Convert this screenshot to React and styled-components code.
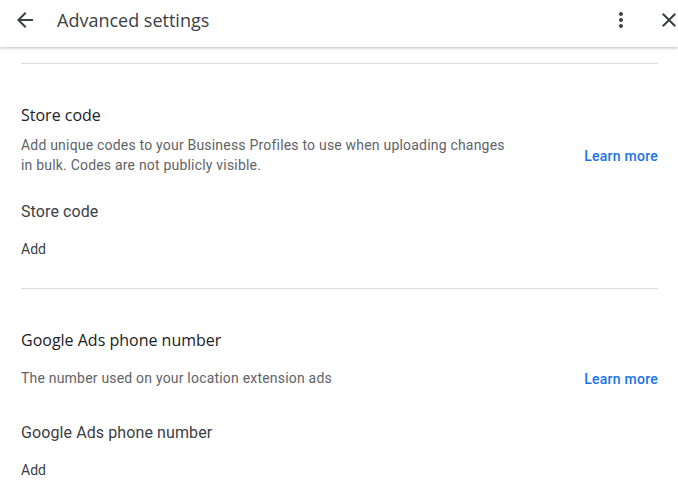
import React from 'react'
import styled, { createGlobalStyle } from 'styled-components'

const Global = createGlobalStyle`
  html, body {
    margin: 0;
    padding: 0;
    background: #fff;
    overflow: hidden;
    font-family: Roboto, "Liberation Sans", Arial, sans-serif;
  }
`

const sections = [
  {
    title: 'Store code',
    description: 'Add unique codes to your Business Profiles to use when uploading changes in bulk. Codes are not publicly visible.',
    label: 'Store code',
    descTop: 8,
    labelTop: 25,
  },
  {
    title: 'Google Ads phone number',
    description: 'The number used on your location extension ads',
    label: 'Google Ads phone number',
    descTop: 16,
    labelTop: 33,
  },
]

function App() {
  return (
    <Page>
      <Global />
      <Header>
        <IconButton aria-label="Back">
          <svg width="24" height="24" viewBox="0 0 24 24">
            <path fill="#3c4043" d="M20 11H7.83l5.59-5.59L12 4l-8 8 8 8 1.41-1.41L7.83 13H20v-2z" />
          </svg>
        </IconButton>
        <Title>Advanced settings</Title>
        <Actions>
          <IconButton aria-label="More">
            <svg width="24" height="24" viewBox="0 0 24 24">
              <path fill="#3c4043" d="M12 8c1.1 0 2-.9 2-2s-.9-2-2-2-2 .9-2 2 .9 2 2 2zm0 2c-1.1 0-2 .9-2 2s.9 2 2 2 2-.9 2-2-.9-2-2-2zm0 6c-1.1 0-2 .9-2 2s.9 2 2 2 2-.9 2-2-.9-2-2-2z" />
            </svg>
          </IconButton>
          <IconButton aria-label="Close">
            <svg width="24" height="24" viewBox="0 0 24 24">
              <path fill="#3c4043" d="M19 6.41L17.59 5 12 10.59 6.41 5 5 6.41 10.59 12 5 17.59 6.41 19 12 13.41 17.59 19 19 17.59 13.41 12z" />
            </svg>
          </IconButton>
        </Actions>
      </Header>
      <Body>
        {sections.map((s) => (
          <Section key={s.title}>
            <Divider />
            <SectionTitle>{s.title}</SectionTitle>
            <DescRow $top={s.descTop}>
              <Description>{s.description}</Description>
              <Link href="#">Learn more</Link>
            </DescRow>
            <FieldLabel $top={s.labelTop}>{s.label}</FieldLabel>
            <AddButton>Add</AddButton>
          </Section>
        ))}
      </Body>
    </Page>
  )
}

export default App

const Page = styled.div`
  width: 678px;
  height: 504px;
  overflow: hidden;
  background: #fff;
`

const Header = styled.header`
  height: 47px;
  display: flex;
  align-items: center;
  padding: 0 0 7px 13px;
  box-sizing: border-box;
  box-shadow: 0 1px 3px rgba(60, 64, 67, 0.35);
  position: relative;
`

const IconButton = styled.button`
  width: 24px;
  height: 24px;
  padding: 0;
  border: none;
  background: none;
  display: flex;
  align-items: center;
  justify-content: center;
  cursor: pointer;
`

const Title = styled.h1`
  margin: 0 0 0 20px;
  font-family: "Open Sans", Roboto, sans-serif;
  font-size: 18px;
  font-weight: 400;
  color: #3c4043;
  flex: 1;
`

const Actions = styled.div`
  display: flex;
  gap: 24px;
  margin-right: -3px;
`

const Body = styled.main`
  padding: 16px 20px 0 21px;
`

const Section = styled.section`
  display: flex;
  flex-direction: column;
  padding-bottom: 29px;
`

const Divider = styled.hr`
  margin: 0;
  border: none;
  border-top: 1px solid #dadce0;
`

const SectionTitle = styled.h2`
  margin: 39px 0 0;
  font-family: "Open Sans", Roboto, sans-serif;
  font-size: 16px;
  line-height: 24px;
  font-weight: 400;
  color: #202124;
`

const DescRow = styled.div`
  margin-top: ${(p) => p.$top}px;
  display: flex;
  align-items: center;
  justify-content: space-between;
  gap: 40px;
`

const Description = styled.p`
  margin: 0;
  max-width: 490px;
  font-size: 14px;
  line-height: 20px;
  letter-spacing: 0.2px;
  color: #5f6368;
`

const Link = styled.a`
  font-size: 14px;
  font-weight: 500;
  letter-spacing: 0.25px;
  color: #1a73e8;
  text-decoration: none;
  white-space: nowrap;
  padding-top: 1px;
`

const FieldLabel = styled.div`
  margin-top: ${(p) => p.$top}px;
  font-size: 16px;
  line-height: 24px;
  letter-spacing: 0.1px;
  color: #3c4043;
`

const AddButton = styled.div`
  margin-top: 15px;
  font-size: 14px;
  line-height: 20px;
  color: #3c4043;
`
